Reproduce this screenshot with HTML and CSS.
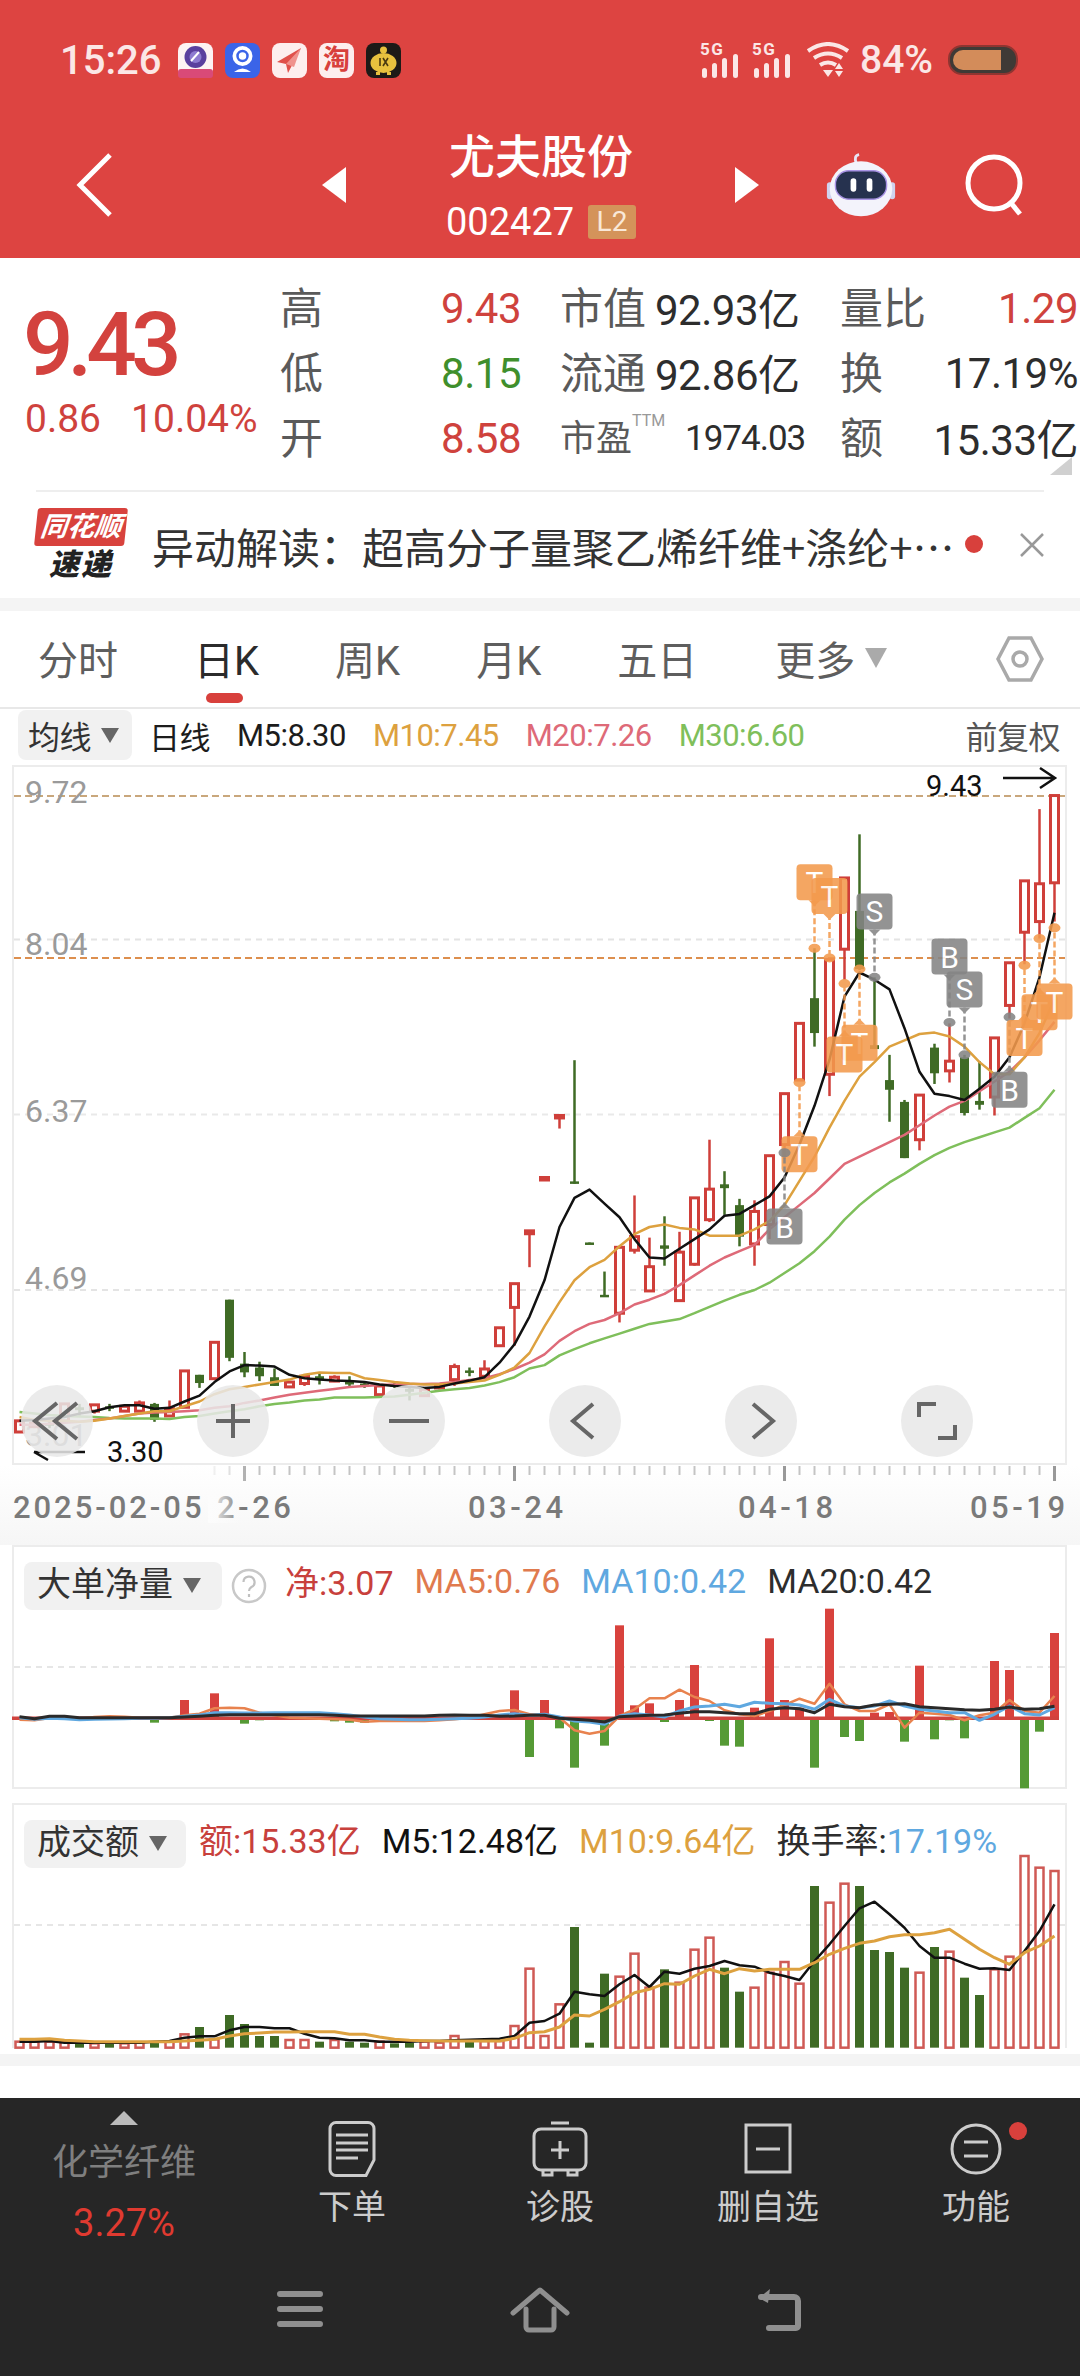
FILE: index.html
```html
<!DOCTYPE html>
<html lang="zh-CN">
<head>
  <meta charset="UTF-8">
  <meta name="viewport" content="width=device-width,initial-scale=1.0">
  <title>尤夫股份</title>
  <link rel="stylesheet" href="styles.css">
</head>
<body>

  <header class="top">
    <div class="status-bar">
      <span class="clock">15:26</span>
      <div class="app-icons">
        <svg class="app" viewBox="0 0 35 35"><rect width="35" height="35" rx="8" fill="#fdf3f3"/><circle cx="17.5" cy="14" r="11" fill="#5a3f9e"/><circle cx="17.5" cy="14" r="6" fill="#8d7ad0"/><path d="M13 18 21 9" stroke="#fff" stroke-width="2"/><rect y="26" width="35" height="9" rx="3" fill="#d94a78"/></svg>
        <svg class="app" viewBox="0 0 35 35"><rect width="35" height="35" rx="8" fill="#3b64e8"/><circle cx="17.5" cy="13" r="10" fill="#fff"/><circle cx="17.5" cy="13" r="5" fill="none" stroke="#3b64e8" stroke-width="2.5"/><path d="M9 29q8.5-7 17 0z" fill="#fff"/></svg>
        <svg class="app" viewBox="0 0 35 35"><rect width="35" height="35" rx="8" fill="#fdeeee"/><path d="M29 5 5 19l9 2 2 9z" fill="#e0504a"/><path d="M29 5 14 21l8 3z" fill="#f0928d"/></svg>
        <div class="app app-tao">淘</div>
        <svg class="app" viewBox="0 0 35 35"><rect width="35" height="35" rx="8" fill="#1d1a17"/><ellipse cx="17.5" cy="20" rx="13" ry="10" fill="#e8c13e"/><circle cx="17.5" cy="7" r="3.5" fill="#e8c13e"/><path d="M10 29h4v3h-4zM21 29h4v3h-4z" fill="#e8c13e"/><path d="M14 15v8M17 15l5 8M22 15l-5 8" stroke="#4a3a10" stroke-width="1.6"/></svg>
      </div>
      <div class="status-right">
        <div class="signal"><span class="five-g">5G</span><svg viewBox="0 0 44 24"><rect x="2" y="14" width="5" height="10" rx="2.5"/><rect x="12" y="9" width="5" height="15" rx="2.5"/><rect x="22" y="4" width="5" height="20" rx="2.5"/><rect x="33" y="0" width="5" height="24" rx="2.5"/></svg></div>
        <div class="signal"><span class="five-g">5G</span><svg viewBox="0 0 44 24"><rect x="2" y="14" width="5" height="10" rx="2.5"/><rect x="12" y="9" width="5" height="15" rx="2.5"/><rect x="22" y="4" width="5" height="20" rx="2.5"/><rect x="33" y="0" width="5" height="24" rx="2.5"/></svg></div>
        <svg class="wifi" viewBox="0 0 44 36" fill="none" stroke="#fbe7e6" stroke-width="4"><path d="M2 9q20-14 40 0"/><path d="M8 16q14-9 28 0"/><path d="M14 23q8-5 16 0"/><path d="M17 28h10l-5 7z" fill="#fbe7e6" stroke="none"/><path d="M29 27h8l-4-6zM29 29h8l-4 6z" fill="#fbe7e6" stroke="none"/></svg>
        <span class="battery-pct">84%</span>
        <div class="battery"><div class="battery-fill"></div></div>
      </div>
    </div>
    <div class="nav-bar">
      <svg class="nav-back" viewBox="0 0 40 66" fill="none" stroke="#fff" stroke-width="5"><path d="M35 3 5 33l30 30"/></svg>
      <div class="nav-tri nav-tri-left"></div>
      <div class="stock-id">
        <div class="stock-name">尤夫股份</div>
        <div class="stock-code">002427<span class="badge-l2">L2</span></div>
      </div>
      <div class="nav-tri nav-tri-right"></div>
      <svg class="nav-robot" viewBox="0 0 76 70">
        <path d="M33 12q-3-8 3-9" fill="none" stroke="#e8e6f6" stroke-width="3"/>
        <rect x="2" y="32" width="6" height="18" rx="3" fill="#cfd2ee"/>
        <rect x="68" y="32" width="6" height="18" rx="3" fill="#cfd2ee"/>
        <ellipse cx="38" cy="39" rx="33" ry="29" fill="#f3f3fb"/>
        <rect x="11" y="20" width="54" height="30" rx="14" fill="#26324f" stroke="#a893e4" stroke-width="1.5"/>
        <rect x="27" y="28" width="6" height="14" rx="3" fill="#fff"/>
        <rect x="44" y="28" width="6" height="14" rx="3" fill="#fff"/>
      </svg>
      <svg class="nav-search" viewBox="0 0 62 62" fill="none" stroke="#fff" stroke-width="5"><circle cx="29" cy="29" r="26"/><path d="M46 49l9 11"/></svg>
    </div>
  </header>

  <section class="quote">
    <div class="quote-left">
      <div class="quote-price">9.43</div>
      <div class="quote-change"><span>0.86</span><span>10.04%</span></div>
    </div>
    <div class="quote-grid">
      <div class="cell cell-a"><span class="lbl">高</span><span class="red">9.43</span></div>
      <div class="cell cell-b"><span class="lbl">市值</span><span class="yi">92.93亿</span></div>
      <div class="cell"><span class="lbl">量比</span><span class="red">1.29</span></div>
      <div class="cell cell-a"><span class="lbl">低</span><span class="green">8.15</span></div>
      <div class="cell cell-b"><span class="lbl">流通</span><span class="yi">92.86亿</span></div>
      <div class="cell"><span class="lbl">换</span><span>17.19%</span></div>
      <div class="cell cell-a"><span class="lbl">开</span><span class="red">8.58</span></div>
      <div class="cell cell-b"><span class="lbl pe-lbl">市盈<sup class="ttm">TTM</sup></span><span class="pe-val">1974.03</span></div>
      <div class="cell"><span class="lbl">额</span><span class="yi">15.33亿</span></div>
    </div>
    <div class="corner"></div>
  </section>

  <section class="news">
    <div class="news-logo">
      <div class="news-flag"><span>同花顺</span></div>
      <div class="news-sub">速递</div>
    </div>
    <div class="news-text">异动解读：超高分子量聚乙烯纤维+涤纶+…</div>
    <div class="news-dot"></div>
    <svg class="news-close" viewBox="0 0 24 24" fill="none" stroke="#999" stroke-width="2.5"><path d="M1 1l22 22M23 1 1 23"/></svg>
  </section>

  <div class="band"></div>

  <nav class="tabs">
    <span class="tab">分时</span>
    <span class="tab tab-on">日K</span>
    <span class="tab">周K</span>
    <span class="tab">月K</span>
    <span class="tab">五日</span>
    <span class="tab tab-more">更多<i class="caret caret-light"></i></span>
    <svg class="tabs-gear" viewBox="0 0 48 46" fill="none" stroke="#a9a9a9" stroke-width="3.5"><path d="M13 2h22l11 21-11 21H13L2 23z"/><circle cx="24" cy="23" r="7"/></svg>
  </nav>

  <div class="legend">
    <div class="chip chip-legend">均线<i class="caret"></i></div>
    <span>日线</span>
    <span>M5:8.30</span>
    <span class="c-orange">M10:7.45</span>
    <span class="c-pink">M20:7.26</span>
    <span class="c-green">M30:6.60</span>
    <span class="legend-right">前复权</span>
  </div>

  <div class="chart-box">
    <svg id="kline" class="plot" viewBox="14 766 1051 696" width="1051" height="696"></svg>
    <div class="chart-btns">
      <div class="round-btn"><svg viewBox="0 0 72 72"><path d="M36 18 14 36l22 18M56 18 34 36l22 18"/></svg></div>
      <div class="round-btn"><svg viewBox="0 0 72 72"><path d="M36 19v34M19 36h34"/></svg></div>
      <div class="round-btn"><svg viewBox="0 0 72 72"><path d="M16 36h40"/></svg></div>
      <div class="round-btn"><svg viewBox="0 0 72 72"><path d="M44 19 24 36l20 17"/></svg></div>
      <div class="round-btn"><svg viewBox="0 0 72 72"><path d="M28 19l20 17-20 17"/></svg></div>
      <div class="round-btn"><svg viewBox="0 0 72 72"><path d="M18 32V19h17M54 40v13H37"/></svg></div>
    </div>
  </div>

  <svg id="axis" class="axis" viewBox="0 1464 1080 80" width="1080" height="80"></svg>

  <div class="sub-panel sub-net">
    <svg id="net" class="plot" viewBox="14 1546 1051 240" width="1051" height="240"></svg>
    <div class="sub-head">
      <div class="chip chip-net">大单净量<i class="caret"></i></div>
      <svg class="help" viewBox="0 0 36 36"><circle cx="18" cy="18" r="16" fill="none" stroke="#c8c8c8" stroke-width="2.5"/><path d="M12.5 14a5.5 5.5 0 1 1 8 5q-2.5 1.5-2.5 4M18 26v3" fill="none" stroke="#c0c0c0" stroke-width="2.2"/></svg>
      <span class="c-red">净:3.07</span>
      <span class="c-coral">MA5:0.76</span>
      <span class="c-blue">MA10:0.42</span>
      <span>MA20:0.42</span>
    </div>
  </div>

  <div class="sub-panel sub-vol">
    <svg id="vol" class="plot" viewBox="14 1804 1051 243" width="1051" height="243"></svg>
    <div class="sub-head">
      <div class="chip chip-vol">成交额<i class="caret"></i></div>
      <span class="c-red">额:15.33亿</span>
      <span class="c-black">M5:12.48亿</span>
      <span class="c-orange">M10:9.64亿</span>
      <span>换手率:<span class="c-blue">17.19%</span></span>
    </div>
  </div>

  <div class="band band-low"></div>
  <div class="white-gap"></div>

  <footer class="bottom">
    <div class="bottom-tabs">
      <div class="sector">
        <div class="sector-tri"></div>
        <div class="sector-name">化学纤维</div>
        <div class="sector-val">3.27%</div>
      </div>
      <div class="action">
        <svg viewBox="0 0 48 56"><path d="M8 1.5h32a6 6 0 0 1 6 6V39l-8 15.5H8a6 6 0 0 1-6-6v-41a6 6 0 0 1 6-6z"/><path d="M8 14h32M8 22h32M8 29h32M8 37h22"/></svg>
        <span>下单</span>
      </div>
      <div class="action">
        <svg viewBox="0 0 56 56"><path d="M19 2h18M9 8h38a7 7 0 0 1 7 7v27a7 7 0 0 1-7 7H9a7 7 0 0 1-7-7V15a7 7 0 0 1 7-7z"/><path d="M28 20v18M19 29h18M11 49v5h9v-5M36 49v5h9v-5"/></svg>
        <span>诊股</span>
      </div>
      <div class="action">
        <svg viewBox="0 0 48 56"><path d="M2 4h44v47H2z"/><path d="M12 28h24"/></svg>
        <span>删自选</span>
      </div>
      <div class="action">
        <svg viewBox="0 0 52 56"><circle cx="26" cy="28" r="24"/><path d="M14 21h24M14 35h24"/></svg>
        <span>功能</span>
        <div class="action-dot"></div>
      </div>
    </div>
    <div class="sys-nav">
      <svg viewBox="0 0 60 46"><path d="M10 7h40M10 22h40M10 37h40" stroke-width="6"/></svg>
      <svg viewBox="0 0 60 46"><path d="M3 26 30 3l27 23" stroke-width="5"/><path d="M16 22v18a3 3 0 0 0 3 3h22a3 3 0 0 0 3-3V22" stroke-width="5"/></svg>
      <svg viewBox="0 0 60 46"><path d="M11 10h33a4 4 0 0 1 4 4v25a2 2 0 0 1-2 2H19" stroke-width="6"/><path d="M20 2 9 11l9 5z" fill="#8f8f8f" stroke="none"/></svg>
    </div>
  </footer>

  <script src="chart.js"></script>
</body>
</html>
```

FILE: styles.css
```css
* {
  box-sizing: border-box;
}

body {
  margin: 0;
  width: 1080px;
  height: 2376px;
  overflow: hidden;
  background: #fff;
  color: #333;
  font-family: Roboto, "Noto Sans CJK SC", sans-serif;
}

/* header */
.top {
  height: 258px;
  background: #dd4441;
}

.status-bar {
  height: 120px;
  display: flex;
  align-items: center;
  padding: 0 62px 0 60px;
  color: #fbe7e6;
}

.clock {
  width: 118px;
  font-size: 40px;
  font-weight: 500;
}

.app-icons {
  display: flex;
  gap: 12px;
}

.app {
  width: 35px;
  height: 35px;
  display: block;
}

.app-tao {
  background: #fdeeee;
  border-radius: 8px;
  color: #d8403c;
  font-size: 27px;
  font-weight: 700;
  line-height: 35px;
  text-align: center;
}

.status-right {
  margin-left: auto;
  display: flex;
  align-items: center;
  gap: 8px;
}

.signal {
  width: 44px;
  height: 36px;
  display: flex;
  flex-direction: column;
  fill: #fbe7e6;
}

.signal svg {
  display: block;
  width: 44px;
  height: 24px;
  margin-top: -2px;
}

.five-g {
  height: 14px;
  font-size: 17px;
  line-height: 14px;
  font-weight: 700;
  letter-spacing: 1.5px;
}

.wifi {
  width: 44px;
  height: 36px;
  margin-left: 2px;
}

.battery-pct {
  margin-left: 2px;
  width: 80px;
  font-size: 39px;
  font-weight: 500;
}

.battery {
  width: 70px;
  height: 30px;
  padding: 3px 15px 3px 3px;
  border-radius: 14px;
  background: #3f3a36;
  border: 2px solid #8f3531;
}

.battery-fill {
  height: 100%;
  border-radius: 10px 0 0 10px;
  background: #d38c5a;
}

.nav-bar {
  height: 138px;
  display: flex;
  align-items: center;
  padding-bottom: 8px;
}

.nav-back {
  width: 40px;
  height: 66px;
  margin-left: 75px;
}

.nav-tri {
  width: 0;
  height: 0;
  border-top: 18px solid transparent;
  border-bottom: 18px solid transparent;
}

.nav-tri-left {
  margin-left: 207px;
  border-right: 24px solid #fff;
}

.nav-tri-right {
  margin-left: 99px;
  border-left: 24px solid #fff;
}

.stock-id {
  width: 190px;
  margin-left: 100px;
  align-self: flex-start;
  padding-top: 12px;
  color: #fff;
}

.stock-name {
  height: 50px;
  font-size: 46px;
  line-height: 50px;
  font-weight: 500;
  text-align: center;
}

.stock-code {
  margin-top: 22px;
  display: flex;
  align-items: center;
  justify-content: space-between;
  height: 36px;
  font-size: 38px;
  line-height: 36px;
}

.badge-l2 {
  width: 48px;
  height: 34px;
  border-radius: 3px;
  background: #d4935a;
  color: #f9e8d8;
  font-size: 28px;
  line-height: 34px;
  text-align: center;
}

.nav-robot {
  width: 72px;
  height: 70px;
  margin-left: 66px;
}

.nav-search {
  width: 62px;
  height: 62px;
  margin-left: 68px;
}

/* quote */
.quote {
  position: relative;
  height: 232px;
  display: flex;
}

.quote-left {
  width: 280px;
  padding: 43px 0 0 23px;
  color: #cf423d;
}

.quote-price {
  height: 88px;
  font-size: 89px;
  line-height: 88px;
  font-weight: 500;
  letter-spacing: -6px;
  color: #d3423e;
}

.quote-change {
  margin-top: 7px;
  padding-left: 2px;
  display: flex;
  gap: 30px;
  font-size: 39px;
  line-height: 46px;
}

.quote-grid {
  display: grid;
  grid-template-columns: 241px 319px 238px;
  grid-auto-rows: 65px;
  padding-top: 18px;
  font-size: 42px;
  color: #2d2d2d;
  letter-spacing: -0.5px;
}

.cell {
  display: flex;
  align-items: center;
  justify-content: space-between;
}

.cell-b {
  justify-content: flex-start;
  gap: 9px;
  padding-left: 39px;
}

.lbl {
  margin-bottom: 8px;
  font-size: 43px;
  letter-spacing: 0;
  color: #5a5a5a;
}

.yi {
  margin-bottom: 5px;
}

.red {
  color: #cf423d;
}

.green {
  color: #3f8f2c;
}

.pe-lbl {
  font-size: 36px;
  display: flex;
  width: 116px;
}

.ttm {
  font-size: 16px;
  line-height: 24px;
  color: #999;
}

.pe-val {
  font-size: 35px;
  letter-spacing: -1px;
}

.corner {
  position: absolute;
  right: 8px;
  bottom: 15px;
  width: 0;
  height: 0;
  border-left: 22px solid transparent;
  border-bottom: 18px solid #d0d0d0;
}

/* news */
.news {
  height: 108px;
  border-top: 2px solid #eee;
  margin: 0 36px;
  display: flex;
  align-items: center;
  position: relative;
}

.news-logo {
  width: 90px;
  flex: none;
}

.news-flag {
  height: 38px;
  background: #d8423d;
  border-radius: 3px;
  transform: skewX(-6deg);
  color: #fff;
  font-size: 27px;
  font-weight: 700;
  font-style: italic;
  line-height: 38px;
  text-align: center;
  white-space: nowrap;
}

.news-sub {
  margin-top: 2px;
  font-size: 30px;
  font-weight: 900;
  font-style: italic;
  line-height: 34px;
  letter-spacing: 2px;
  text-align: center;
  color: #222;
}

.news-text {
  margin-left: 26px;
  flex: none;
  font-family: "Noto Sans CJK SC", sans-serif;
  font-size: 42px;
  color: #333;
  white-space: nowrap;
}

.news-dot {
  position: absolute;
  left: 929px;
  top: 43px;
  width: 18px;
  height: 18px;
  border-radius: 50%;
  background: #d8403c;
}

.news-close {
  margin-left: auto;
  width: 24px;
  height: 24px;
  flex: none;
}

.band {
  height: 13px;
  background: #f4f4f4;
}

/* tabs */
.tabs {
  height: 98px;
  display: flex;
  align-items: center;
  gap: 76px;
  padding: 0 36px 0 38px;
  border-bottom: 2px solid #e8e8e8;
  font-size: 40px;
  color: #5e5e5e;
}

.tab {
  position: relative;
  display: flex;
  align-items: center;
  margin-top: -2px;
}

.tab-on {
  color: #2b2b2b;
}

.tab-on::after {
  content: "";
  position: absolute;
  left: 12px;
  top: 64px;
  width: 37px;
  height: 10px;
  border-radius: 5px;
  background: #d8403c;
}

.tab-more {
  margin-left: 2px;
}

.caret {
  display: inline-block;
  width: 0;
  height: 0;
  margin-left: 10px;
  border-left: 9px solid transparent;
  border-right: 9px solid transparent;
  border-top: 15px solid #666;
}

.caret-light {
  border-left-width: 11px;
  border-right-width: 11px;
  border-top: 20px solid #aaa;
}

.tabs-gear {
  margin-left: auto;
  width: 48px;
  height: 46px;
}

/* legend */
.legend {
  height: 56px;
  display: flex;
  align-items: center;
  gap: 27px;
  padding: 0 20px 4px 18px;
  font-size: 31px;
  letter-spacing: -0.5px;
  color: #1c1c1c;
}

.chip {
  display: flex;
  align-items: center;
  background: #f1f1f1;
  border-radius: 8px;
  color: #333;
  flex: none;
}

.chip-legend {
  width: 114px;
  height: 50px;
  margin-right: -10px;
  padding-left: 10px;
  font-size: 32px;
}

.legend-right {
  margin-left: auto;
  font-size: 32px;
  color: #555;
}

.c-orange { color: #dda13f; }
.c-pink { color: #de6a78; }
.c-green { color: #7fbf5b; }
.c-red { color: #c8403c; }
.c-coral { color: #e07a4e; }
.c-blue { color: #5fa8e0; }
.c-black { color: #111; }

/* main chart */
.chart-box {
  position: relative;
  width: 1055px;
  height: 700px;
  margin-left: 12px;
  border: 2px solid #ececec;
}

.plot {
  display: block;
  overflow: visible;
}

.price-label {
  font-size: 32px;
  fill: #9a9a9a;
}

.extreme-label {
  font-size: 29px;
  fill: #111;
}

.marker-label {
  font-size: 30px;
  fill: #fff;
  text-anchor: middle;
}

.chart-btns {
  position: absolute;
  left: 7px;
  bottom: 6px;
  display: flex;
  gap: 104px;
}

.round-btn {
  width: 72px;
  height: 72px;
  border-radius: 50%;
  background: rgba(232, 232, 232, 0.86);
}

.round-btn svg {
  display: block;
  fill: none;
  stroke: #666;
  stroke-width: 4;
}

/* time axis */
.axis {
  display: block;
  background: linear-gradient(#fff, #f6f6f6);
}

.date-label {
  font-size: 31px;
  letter-spacing: 3.5px;
  fill: #7a7a7a;
  font-weight: 500;
}

/* sub charts */
.sub-panel {
  position: relative;
  width: 1055px;
  margin-left: 12px;
  border: 2px solid #ececec;
}

.sub-net {
  height: 244px;
}

.sub-vol {
  height: 245px;
  margin-top: 14px;
  border-bottom: 0;
}

.sub-head {
  position: absolute;
  left: 10px;
  top: 9px;
  display: flex;
  align-items: center;
  gap: 21px;
  font-size: 34px;
  color: #2d2d2d;
  white-space: nowrap;
}

.sub-head > span {
  margin-bottom: 10px;
}

.chip-net {
  width: 198px;
  height: 48px;
  padding: 0 0 8px 13px;
  font-size: 34px;
  margin-right: -12px;
}

.chip-vol {
  width: 162px;
  height: 48px;
  padding: 0 0 8px 13px;
  font-size: 34px;
  margin-right: -8px;
}

.chip-net .caret,
.chip-vol .caret {
  margin-top: 8px;
}

.help {
  width: 36px;
  height: 36px;
  margin-right: -3px;
}

.band-low {
  height: 12px;
  margin-top: 6px;
}

.white-gap {
  height: 32px;
}

/* bottom bar */
.bottom {
  height: 279px;
  background: #262626;
}

.bottom-tabs {
  height: 178px;
  display: grid;
  grid-template-columns: 248px repeat(4, 208px);
}

.sector {
  padding-top: 13px;
  display: flex;
  flex-direction: column;
  align-items: center;
}

.sector-tri {
  width: 0;
  height: 0;
  border-left: 14px solid transparent;
  border-right: 14px solid transparent;
  border-bottom: 14px solid #bbb;
}

.sector-name {
  margin-top: 16px;
  font-size: 36px;
  line-height: 44px;
  color: #7f7f7f;
}

.sector-val {
  margin-top: 16px;
  font-size: 38px;
  line-height: 44px;
  color: #e03a30;
}

.action {
  position: relative;
  padding-top: 23px;
  display: flex;
  flex-direction: column;
  align-items: center;
  font-size: 34px;
  color: #ccc;
}

.action svg {
  height: 56px;
  fill: none;
  stroke: #ccc;
  stroke-width: 3;
}

.action span {
  margin-top: 10px;
  line-height: 40px;
}

.action-dot {
  position: absolute;
  left: 137px;
  top: 24px;
  width: 18px;
  height: 18px;
  border-radius: 50%;
  background: #d8403c;
}

.sys-nav {
  display: flex;
  justify-content: center;
  gap: 180px;
  padding-top: 11px;
}

.sys-nav svg {
  width: 60px;
  height: 46px;
  fill: none;
  stroke: #8f8f8f;
  stroke-linejoin: round;
  stroke-linecap: round;
}
```

FILE: chart.js
```js
// 70 trading days, one slot every 15px. values below are read in chart units, see the yMain/yNet/yVol helpers
var SVGNS = 'http://www.w3.org/2000/svg';
var RED = '#cf3f3a', DARKGREEN = '#3f6b25';

function xAt(i) { return 19.5 + 15 * i; }
function yMain(v) { return 780 + v / 2.063; }
function yNet(v) { return 1530 + v / 3; }
function yVol(v) { return 1790 + v / 3; }

function add(svg, name, attrs, text) {
  var el = document.createElementNS(SVGNS, name);
  for (var k in attrs) el.setAttribute(k, attrs[k]);
  if (text) el.textContent = text;
  svg.appendChild(el);
  return el;
}

function line(svg, vals, fy, color, width) {
  var pts = vals.map(function (v, i) { return xAt(i) + ',' + fy(v).toFixed(1); });
  add(svg, 'polyline', { points: pts.join(' '), fill: 'none', stroke: color, 'stroke-width': width, 'stroke-linejoin': 'round' });
}

function hline(svg, x1, x2, y, color, dash) {
  add(svg, 'line', { x1: x1, x2: x2, y1: y, y2: y, stroke: color, 'stroke-width': 2, 'stroke-dasharray': dash });
}

/* ---- K line ---- */
// [colour, high, top, bottom, low]
var candles = [
  ['r',1320,1320,1343,1343],['r',1322,1325,1332,1335],['g',1318,1325,1330,1335],['r',1285,1285,1320,1320],['g',1285,1292,1298,1310],
  ['r',1287,1287,1300,1305],['g',1285,1290,1295,1300],['r',1288,1290,1300,1300],['r',1278,1283,1300,1300],['g',1283,1285,1318,1322],
  ['r',1278,1295,1310,1312],['r',1217,1217,1292,1292],['g',1225,1225,1242,1252],['r',1158,1158,1233,1233],['g',1070,1070,1190,1197],
  ['g',1178,1202,1220,1230],['g',1198,1210,1228,1238],['g',1212,1230,1248,1248],['r',1238,1240,1250,1252],['r',1225,1228,1243,1248],
  ['g',1222,1228,1234,1245],['r',1226,1230,1238,1240],['g',1228,1236,1245,1248],['g',1240,1243,1247,1252],['r',1245,1248,1266,1266],
  ['g',1240,1244,1247,1252],['g',1250,1254,1260,1278],['r',1250,1255,1268,1268],['r',1245,1247,1250,1255],['r',1202,1208,1235,1248],
  ['g',1210,1216,1221,1228],['r',1195,1213,1228,1228],['r',1128,1128,1165,1165],['r',1037,1037,1086,1165],['r',928,928,934,1003],
  ['r',818,818,820,820],['r',690,690,694,717],['g',576,826,831,831],['g',952,952,955,955],['g',1012,1060,1064,1064],
  ['r',962,962,1098,1117],['r',855,940,968,975],['r',942,1002,1052,1052],['g',898,958,965,1000],['r',930,972,1072,1072],
  ['r',860,860,997,1000],['r',740,842,905,910],['g',805,832,840,895],['g',862,875,940,960],['r',865,888,955,1000],
  ['r',773,773,915,945],['r',645,645,750,780],['r',500,500,617,617],['g',345,448,520,548],['r',368,368,605,650],
  ['r',200,200,347,410],['g',110,268,388,390],['g',405,545,553,553],['g',565,617,637,703],['g',658,662,778,778],
  ['r',648,648,740,762],['g',542,550,603,625],['r',500,578,598,622],['g',565,570,685,690],['g',578,660,668,678],
  ['r',530,530,652,690],['r',375,375,463,490],['r',206,206,312,378],['r',58,212,290,325],['r',30,30,210,290]
];

var m5 = [1320,1318,1315,1312,1305,1300,1292,1288,1288,1295,1293,1280,1268,1240,1218,1205,1206,1208,1225,1232,1235,1237,1238,1240,1245,1248,1250,1252,1250,1243,1237,1230,1200,1162,1105,1030,920,860,843,872,900,945,983,985,965,945,925,897,893,875,857,818,750,670,575,445,395,410,430,510,600,645,650,658,635,610,570,500,405,272];
var m10 = [1312,1318,1320,1320,1322,1320,1315,1310,1305,1300,1300,1290,1280,1265,1255,1250,1245,1240,1235,1225,1220,1221,1221,1232,1236,1240,1243,1245,1245,1243,1240,1237,1225,1210,1180,1125,1075,1030,1003,988,960,935,920,915,922,925,938,938,938,925,908,875,825,775,715,660,610,580,548,535,522,519,527,548,580,605,605,570,520,450];
var m20 = [1328,1328,1326,1324,1322,1318,1315,1310,1305,1303,1302,1300,1298,1293,1290,1283,1278,1272,1266,1262,1258,1254,1250,1248,1246,1245,1244,1244,1243,1240,1236,1232,1224,1213,1200,1183,1155,1135,1120,1112,1098,1080,1070,1058,1040,1020,1000,983,970,957,925,900,875,850,820,790,775,760,745,730,710,690,672,660,640,620,600,570,535,497];
var m30 = [1302,1305,1308,1310,1311,1312,1314,1315,1315,1315,1316,1312,1310,1305,1300,1296,1290,1285,1282,1278,1276,1272,1272,1272,1271,1270,1266,1262,1258,1255,1252,1247,1240,1230,1212,1205,1185,1172,1160,1150,1140,1130,1120,1115,1110,1098,1085,1072,1060,1050,1035,1015,995,970,940,905,875,850,828,810,790,772,757,745,735,725,715,695,675,637];

// [slot, label, box top, dot]
var markers = [
  [53,'T',172,345],[54,'T',200,365],[56,'T',503,388],[55,'T',527,418],[52,'T',733,622],
  [57,'S',232,405],[51,'B',882,767],[62,'B',325,498],[63,'S',393,565],[66,'B',600,487],
  [67,'T',493,380],[68,'T',440,325],[69,'T',418,303]
];

function drawKline() {
  var svg = document.getElementById('kline');
  [[938.5,'#e4e4e4'],[1113.5,'#e9e9e9'],[1289,'#e4e4e4']].forEach(function (g) { hline(svg, 14, 1065, g[0], g[1], '6 5'); });
  hline(svg, 14, 1065, 795, '#c9a77c', '7 4');
  hline(svg, 14, 1065, 957, '#dd8f4e', '7 4');

  [['9.72',802],['8.04',954],['6.37',1121],['4.69',1288],['3.01',1445]].forEach(function (p) {
    add(svg, 'text', { 'class': 'price-label', x: 25, y: p[1] }, p[0]);
  });

  candles.forEach(function (c, i) {
    var x = xAt(i), color = c[0] === 'r' ? RED : DARKGREEN;
    add(svg, 'line', { x1: x, x2: x, y1: yMain(c[1]), y2: yMain(c[4]), stroke: color, 'stroke-width': 2.5 });
    var top = yMain(c[2]), h = Math.max(yMain(c[3]) - top, 2.5);
    if (c[0] === 'r') {
      add(svg, 'rect', { x: x - 4, y: top, width: 8, height: h, fill: '#fff', stroke: color, 'stroke-width': 3 });
    } else {
      add(svg, 'rect', { x: x - 4.5, y: top, width: 9, height: h, fill: color });
    }
  });

  line(svg, m30, yMain, '#7fbf5b', 2.5);
  line(svg, m20, yMain, '#de6a78', 2.5);
  line(svg, m10, yMain, '#dda13f', 2.5);
  line(svg, m5, yMain, '#111', 2.5);

  markers.forEach(function (m) {
    var x = xAt(m[0]), top = yMain(m[2]), dot = yMain(m[3]);
    var color = m[1] === 'T' ? '#f39a4d' : '#858585';
    var mid = top + 18;
    var g = add(svg, 'g', { opacity: 0.88 });
    add(g, 'line', { x1: x, x2: x, y1: mid, y2: dot, stroke: color, 'stroke-width': 2.5, 'stroke-dasharray': '6 3' });
    add(g, 'ellipse', { cx: x, cy: dot, rx: 6, ry: 4.5, fill: color });
    add(g, 'rect', { x: x - 18, y: top, width: 36, height: 36, rx: 4, fill: color });
    var tip = dot > mid ? [top + 36, top + 42] : [top, top - 6];
    add(g, 'path', { d: 'M' + (x - 6) + ' ' + tip[0] + 'L' + x + ' ' + tip[1] + 'L' + (x + 6) + ' ' + tip[0] + 'z', fill: color });
    add(g, 'text', { 'class': 'marker-label', x: x, y: top + 29 }, m[1]);
  });

  add(svg, 'text', { 'class': 'extreme-label', x: 926, y: 795 }, '9.43');
  add(svg, 'path', { d: 'M1003 777h51M1040 767l15 10-15 10', fill: 'none', stroke: '#111', 'stroke-width': 2.5 });
  add(svg, 'text', { 'class': 'extreme-label', x: 107, y: 1461 }, '3.30');
  add(svg, 'path', { d: 'M85 1451H34M48 1459l-14-8', fill: 'none', stroke: '#111', 'stroke-width': 2.5 });
}

function drawAxis() {
  var svg = document.getElementById('axis');
  for (var i = 13; i < 70; i++) {
    var x = xAt(i), tall = (i - 15) % 18 === 0;
    var opacity = i < 16 ? (i - 12) * 0.25 : 1;
    add(svg, 'line', { x1: x, x2: x, y1: 1465, y2: tall ? 1480 : 1474, stroke: tall ? '#999' : '#c4c4c4', 'stroke-width': tall ? 3 : 2, opacity: opacity });
  }
  // the first label covers the start of 02-26, only its tail shows
  add(svg, 'text', { 'class': 'date-label', x: 217, y: 1517 }, '2-26');
  var defs = add(svg, 'defs', {});
  var grad = add(defs, 'linearGradient', { id: 'fade' });
  add(grad, 'stop', { offset: '0', 'stop-color': '#fcfcfc', 'stop-opacity': 1 });
  add(grad, 'stop', { offset: '1', 'stop-color': '#fcfcfc', 'stop-opacity': 0 });
  add(svg, 'rect', { x: 208, y: 1490, width: 34, height: 32, fill: 'url(#fade)' });
  add(svg, 'text', { 'class': 'date-label', x: 13, y: 1517, 'textLength': 192 }, '2025-02-05');
  add(svg, 'text', { 'class': 'date-label', x: 468, y: 1517 }, '03-24');
  add(svg, 'text', { 'class': 'date-label', x: 738, y: 1517 }, '04-18');
  add(svg, 'text', { 'class': 'date-label', x: 970, y: 1517 }, '05-19');
}

/* ---- big order net ---- */
var ZERO_NET = 562;
var netBars = { 9:575, 11:507, 13:487, 15:578, 16:568, 21:571, 22:575, 23:575, 33:478, 34:678, 35:507,
  36:592, 37:710, 39:644, 40:283, 41:523, 42:517, 43:573, 44:507, 45:402, 46:570, 47:644, 48:647, 49:530,
  50:322, 51:507, 52:530, 53:710, 54:233, 55:618, 56:630, 57:545, 58:543, 59:632, 60:404, 61:625, 62:568,
  63:622, 65:390, 66:417, 67:772, 68:602, 69:306 };
var netMa5 = [566,568,561,562,563,558,556,557,560,561,560,553,548,532,530,532,545,553,560,562,563,565,566,572,570,570,570,570,568,565,560,550,540,537,550,550,560,598,608,600,555,535,502,502,476,498,510,538,550,555,540,522,503,518,458,520,540,540,520,590,545,548,552,568,553,545,507,540,545,495];
var netMa10 = [560,565,562,563,566,565,564,563,562,562,560,556,552,545,545,546,546,545,545,545,545,548,552,558,563,565,566,566,565,563,562,558,552,548,553,550,558,570,573,580,555,548,552,558,540,528,525,520,527,514,517,518,522,535,505,525,530,525,510,525,535,540,545,545,568,550,525,548,552,530];
var netMa20 = [557,563,556,556,560,560,560,560,560,560,560,558,556,553,551,551,551,551,551,551,551,553,555,555,555,555,555,555,553,552,553,553,556,555,553,553,562,565,568,573,557,555,553,552,547,542,542,545,548,548,535,530,533,545,520,527,530,522,520,518,527,530,533,536,538,535,528,535,533,526];

function drawNet() {
  var svg = document.getElementById('net');
  hline(svg, 14, 1065, 1666, '#e6e6e6', '6 5');
  for (var i in netBars) {
    var v = netBars[i], x = xAt(+i) - 4.5, zero = yNet(ZERO_NET), y = yNet(v);
    add(svg, 'rect', { x: x, y: Math.min(zero, y), width: 9, height: Math.abs(y - zero), fill: v < ZERO_NET ? '#d8423d' : '#559a35' });
  }
  add(svg, 'rect', { x: 12, y: 1715.5, width: 1047, height: 3.5, fill: '#d0433e' });
  line(svg, netMa5, yNet, '#e8824e', 2.5);
  line(svg, netMa10, yNet, '#5fa8e0', 3);
  line(svg, netMa20, yNet, '#2a2a2a', 3);
}

/* ---- turnover ---- */
var volBars = [
  ['r',752],['r',752],['r',752],['r',752],['g',755],['r',757],['g',758],['r',757],['r',755],['g',755],
  ['r',752],['r',730],['g',708],['r',745],['g',672],['g',699],['g',735],['g',735],['r',747],['r',747],
  ['g',752],['r',747],['g',752],['g',755],['r',752],['g',757],['g',755],['r',752],['r',755],['r',735],
  ['g',752],['r',750],['r',750],['r',705],['r',533],['r',735],['r',640],['g',408],['g',755],['g',548],
  ['r',557],['r',488],['r',590],['g',535],['r',575],['r',476],['r',440],['g',530],['g',602],['r',590],
  ['r',545],['r',513],['r',578],['g',285],['r',335],['r',278],['g',285],['g',477],['g',483],['g',530],
  ['r',545],['g',468],['r',482],['g',560],['g',612],['r',535],['r',497],['r',195],['r',230],['r',240]
];
var volM5 = [752,752,750,755,755,755,755,755,755,752,750,740,736,736,718,708,708,712,712,728,740,742,748,748,752,752,752,750,750,748,746,745,743,735,695,690,668,602,610,615,580,552,588,542,548,533,525,510,523,527,545,555,567,510,460,405,352,332,370,410,465,500,500,518,533,532,537,480,420,340];
var volM10 = [745,745,743,748,750,752,752,752,752,752,752,750,748,745,735,728,726,723,723,722,722,722,730,730,738,745,748,749,750,750,750,750,750,742,725,722,708,672,675,655,632,605,595,578,580,555,535,548,533,540,535,535,535,515,490,472,457,450,437,431,431,425,415,445,475,500,520,485,465,435];

function drawVol() {
  var svg = document.getElementById('vol');
  hline(svg, 14, 1065, 1924, '#e6e6e6', '6 5');
  var base = yVol(770);
  volBars.forEach(function (b, i) {
    var x = xAt(i), y = yVol(b[1]);
    if (b[0] === 'r') {
      add(svg, 'rect', { x: x - 4, y: y, width: 8, height: base - y, fill: '#fff', stroke: '#cf5a55', 'stroke-width': 2.5 });
    } else {
      add(svg, 'rect', { x: x - 4.5, y: y, width: 9, height: base - y, fill: DARKGREEN });
    }
  });
  line(svg, volM5, yVol, '#111', 2.5);
  line(svg, volM10, yVol, '#dda13f', 3);
}

drawKline();
drawAxis();
drawNet();
drawVol();
```
